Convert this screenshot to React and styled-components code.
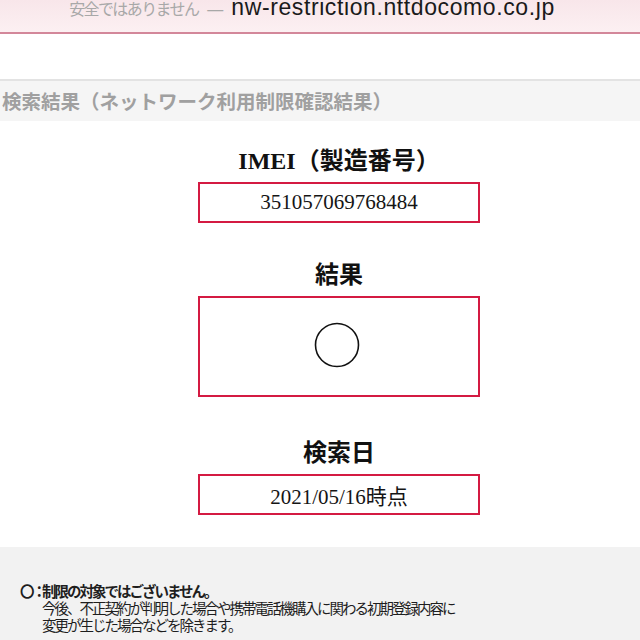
import styled, { createGlobalStyle } from "styled-components";

const GlobalStyle = createGlobalStyle`
  html, body {
    margin: 0;
    padding: 0;
    background: #ffffff;
  }
  body {
    font-family: "Liberation Sans", "Noto Sans CJK JP", sans-serif;
    overflow: hidden;
  }
`;

const SERIF = `"Liberation Serif", "Noto Sans CJK JP", serif`;
const SANS_JP = `"Noto Sans CJK JP", "Liberation Sans", sans-serif`;

export default function App() {
  return (
    <Page>
      <GlobalStyle />
      <AddressBar>
        <AddressText>
          <Warning>安全ではありません</Warning>
          <Dash>—</Dash>
          <Domain>nw-restriction.nttdocomo.co.jp</Domain>
        </AddressText>
      </AddressBar>

      <SectionHead>検索結果（ネットワーク利用制限確認結果）</SectionHead>

      <Results>
        <Label $top={25}>IMEI（製造番号）</Label>
        <Box>351057069768484</Box>

        <Label $top={37}>結果</Label>
        <Box $tall>
          <svg width="46" height="46" viewBox="0 0 46 46">
            <circle cx="23" cy="23" r="21.5" fill="none" stroke="#111" strokeWidth="1.6" />
          </svg>
        </Box>

        <Label $top={41}>検索日</Label>
        <Box>2021/05/16時点</Box>
      </Results>

      <Notes>
        <Note>
          <Mark>〇：</Mark>
          <div>
            <NoteTitle>制限の対象ではございません。</NoteTitle>
            <NoteText>
              今後、不正契約が判明した場合や携帯電話機購入に関わる初期登録内容に
              <br />
              変更が生じた場合などを除きます。
            </NoteText>
          </div>
        </Note>
      </Notes>
    </Page>
  );
}

const Page = styled.div`
  width: 640px;
  height: 640px;
  overflow: hidden;
  display: flex;
  flex-direction: column;
`;

const AddressBar = styled.div`
  height: 32px;
  flex-shrink: 0;
  overflow: hidden;
  background: linear-gradient(#f8e6ea, #fcf0f2);
  border-bottom: 2px solid #d3879a;
  display: flex;
  justify-content: center;
  padding-right: 16px;
`;

const AddressText = styled.div`
  margin-top: -3px;
  line-height: 21px;
  white-space: nowrap;
`;

const Warning = styled.span`
  font-family: ${SANS_JP};
  font-size: 16px;
  letter-spacing: -1.6px;
  color: #a8a8a8;
`;

const Dash = styled.span`
  margin: 0 8px 0 9px;
  font-size: 16px;
  color: #a8a8a8;
`;

const Domain = styled.span`
  font-size: 23px;
  letter-spacing: 0.6px;
  color: #1a1a1a;
`;

const SectionHead = styled.div`
  margin-top: 45px;
  height: 40px;
  line-height: 40px;
  border-top: 2px solid #e3e3e3;
  background: #f5f5f5;
  padding-left: 2px;
  font-family: ${SANS_JP};
  font-size: 19.5px;
  font-weight: 700;
  color: #a0a0a0;
  flex-shrink: 0;
`;

const Results = styled.div`
  width: 282px;
  margin-left: 198px;
  display: flex;
  flex-direction: column;
  align-items: stretch;
`;

const Label = styled.div`
  margin-top: ${({ $top }) => $top}px;
  height: 30px;
  line-height: 30px;
  text-align: center;
  font-family: ${SERIF};
  font-size: 24px;
  font-weight: 700;
  color: #111;
`;

const Box = styled.div`
  margin-top: 6px;
  box-sizing: border-box;
  height: ${({ $tall }) => ($tall ? 101 : 41)}px;
  border: 2px solid #d41a42;
  display: flex;
  align-items: center;
  justify-content: center;
  font-family: ${SERIF};
  font-size: 21px;
  color: #151515;
  svg {
    display: block;
    margin-left: -4px;
    margin-top: -3px;
  }
`;

const Notes = styled.div`
  margin-top: 32px;
  flex: 1;
  background: #f2f2f2;
  padding: 35px 0 0 20px;
`;

const Note = styled.div`
  display: flex;
  font-family: ${SANS_JP};
  font-size: 14.5px;
  line-height: 17px;
  color: #1e1e1e;
`;

const Mark = styled.span`
  width: 22px;
  flex-shrink: 0;
  font-weight: 700;
  letter-spacing: -2.5px;
`;

const NoteTitle = styled.div`
  font-weight: 700;
  letter-spacing: -2px;
`;

const NoteText = styled.div`
  letter-spacing: -2px;
  white-space: nowrap;
`;
